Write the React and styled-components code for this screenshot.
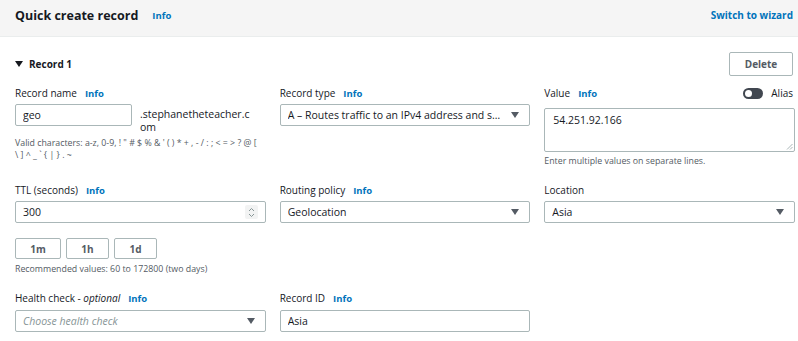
import React from "react";
import styled, { createGlobalStyle } from "styled-components";

const GlobalStyle = createGlobalStyle`
  html, body {
    margin: 0;
    padding: 0;
    background: #ffffff;
    font-family: "Open Sans", "Noto Sans", Arial, sans-serif;
    color: #16191f;
  }
`;

const Panel = styled.div`
  width: 798px;
  height: 341px;
  overflow: hidden;
  background: #ffffff;
`;

const Header = styled.div`
  height: 37px;
  box-sizing: border-box;
  background: #f5f5f5;
  border-bottom: 1px solid #eaeded;
  display: flex;
  align-items: center;
  padding: 0 5px 6px 15px;
`;

const Title = styled.h2`
  margin: 0;
  font-size: 12.5px;
  font-weight: 700;
  color: #16191f;
`;

const InfoLink = styled.a`
  color: #0073bb;
  font-size: ${(p) => p.size || 9.5}px;
  font-weight: 700;
  margin-left: ${(p) => p.gap || 8}px;
  text-decoration: none;
`;

const HeaderLink = styled.a`
  margin-left: auto;
  color: #0073bb;
  font-size: 10px;
  font-weight: 700;
  text-decoration: none;
`;

const Body = styled.div`
  padding: 15px 3px 0 15px;
`;

const SectionRow = styled.div`
  display: flex;
  align-items: center;
  height: 24px;
  margin-right: 2px;
`;

const Caret = styled.span`
  width: 0;
  height: 0;
  border-left: 4px solid transparent;
  border-right: 4px solid transparent;
  border-top: 6px solid #16191f;
  margin-right: 6px;
`;

const SectionTitle = styled.span`
  font-size: 10px;
  font-weight: 700;
`;

const Button = styled.button`
  font-family: inherit;
  background: #ffffff;
  border: 1px solid #aab7b8;
  border-radius: 2px;
  color: #545b64;
  font-weight: 700;
  font-size: ${(p) => p.size || 10}px;
  height: ${(p) => p.h || 24}px;
  width: ${(p) => p.w}px;
  padding: 0;
  cursor: pointer;
`;

const DeleteButton = styled(Button)`
  margin-left: auto;
`;

const Grid = styled.div`
  display: grid;
  grid-template-columns: repeat(3, minmax(0, 1fr));
  column-gap: 14px;
  row-gap: ${(p) => p.rowGap}px;
  margin-top: ${(p) => p.top}px;
`;

const Field = styled.div`
  display: flex;
  flex-direction: column;
  min-width: 0;
`;

const LabelRow = styled.div`
  display: flex;
  align-items: center;
  height: 16px;
  margin-bottom: ${(p) => p.mb || 3}px;
`;

const Label = styled.label`
  font-size: 10px;
  color: #16191f;
`;

const Optional = styled.i`
  font-style: italic;
`;

const Control = styled.div`
  box-sizing: border-box;
  height: 22px;
  width: ${(p) => (p.w ? `${p.w}px` : "100%")};
  border: 1px solid #aab7b8;
  border-radius: 2px;
  background: #ffffff;
  display: flex;
  align-items: center;
  padding: 0 10px 0 7px;
  font-size: 10.5px;
  color: ${(p) => (p.placeholder ? "#879596" : "#16191f")};
  font-style: ${(p) => (p.placeholder ? "italic" : "normal")};
  flex-shrink: 0;
`;

const ControlText = styled.span`
  flex: 1;
  min-width: 0;
  white-space: nowrap;
  overflow: hidden;
  text-overflow: ellipsis;
`;

const SelectCaret = styled.span`
  width: 0;
  height: 0;
  flex-shrink: 0;
  border-left: 4.5px solid transparent;
  border-right: 4.5px solid transparent;
  border-top: 6px solid #545b64;
  margin-left: 10px;
`;

const Spinner = styled.span`
  width: 13px;
  height: 14px;
  background: #f2f3f3;
  border-radius: 2px;
  display: flex;
  align-items: center;
  justify-content: center;
  margin-right: -3px;
`;

const NameRow = styled.div`
  display: flex;
  align-items: flex-start;
`;

const Domain = styled.span`
  font-size: 10.5px;
  line-height: 13px;
  margin: 4px 0 0 8px;
  width: 114px;
  word-break: break-all;
`;

const Help = styled.div`
  font-size: 8.8px;
  line-height: 12px;
  color: #545b64;
  margin-top: ${(p) => p.mt || 0}px;
`;

const Alias = styled.div`
  margin-left: auto;
  display: flex;
  align-items: center;
  font-size: 10px;
  margin-right: 2px;
`;

const Toggle = styled.span`
  position: relative;
  width: 20px;
  height: 11px;
  border-radius: 6px;
  background: #414750;
  margin-right: 8px;
  &::after {
    content: "";
    position: absolute;
    left: 2px;
    top: 2px;
    width: 7px;
    height: 7px;
    border-radius: 50%;
    background: #ffffff;
  }
`;

const TextArea = styled.div`
  box-sizing: border-box;
  position: relative;
  height: 44px;
  margin-top: 4px;
  border: 1px solid #aab7b8;
  border-radius: 2px;
  padding: 4px 8px;
  font-size: 10.5px;
  line-height: 14px;
`;

const Resize = styled.svg`
  position: absolute;
  right: 1px;
  bottom: 1px;
`;

const Presets = styled.div`
  display: flex;
  gap: 5px;
  margin-top: 15px;
`;

const ChevronSpinner = () => (
  <Spinner>
    <svg width="7" height="11" viewBox="0 0 7 11" fill="none" stroke="#879596" strokeWidth="1">
      <path d="M1 4 L3.5 1.5 L6 4" />
      <path d="M1 7 L3.5 9.5 L6 7" />
    </svg>
  </Spinner>
);

const Select = ({ value, placeholder }) => (
  <Control placeholder={placeholder ? 1 : undefined}>
    <ControlText>{value || placeholder}</ControlText>
    <SelectCaret />
  </Control>
);

const FieldLabel = ({ children, info = true, mb }) => (
  <LabelRow mb={mb}>
    <Label>{children}</Label>
    {info && <InfoLink>Info</InfoLink>}
  </LabelRow>
);

const App = () => {
  return (
    <>
      <GlobalStyle />
      <Panel>
        <Header>
          <Title>Quick create record</Title>
          <InfoLink gap={14}>Info</InfoLink>
          <HeaderLink>Switch to wizard</HeaderLink>
        </Header>
        <Body>
          <SectionRow>
            <Caret />
            <SectionTitle>Record 1</SectionTitle>
            <DeleteButton w={64}>Delete</DeleteButton>
          </SectionRow>

          <Grid top={9} rowGap={15}>
            <Field>
              <FieldLabel>Record name</FieldLabel>
              <NameRow>
                <Control w={117}>
                  <ControlText>geo</ControlText>
                </Control>
                <Domain>.stephanetheteacher.com</Domain>
              </NameRow>
              <Help mt={3}>
                {'Valid characters: a-z, 0-9, ! " # $ % & \' ( ) * + , - / : ; < = > ? @ ['}
                <br />
                {"\\ ] ^ _ ` { | } . ~"}
              </Help>
            </Field>
            <Field>
              <FieldLabel>Record type</FieldLabel>
              <Select value="A – Routes traffic to an IPv4 address and some AWS resources" />
            </Field>
            <Field>
              <LabelRow>
                <Label>Value</Label>
                <InfoLink>Info</InfoLink>
                <Alias>
                  <Toggle />
                  Alias
                </Alias>
              </LabelRow>
              <TextArea>
                54.251.92.166
                <Resize width="7" height="7" viewBox="0 0 7 7" stroke="#aab7b8" strokeWidth="1">
                  <path d="M6.5 1 L1 6.5 M6.5 4 L4 6.5" />
                </Resize>
              </TextArea>
              <Help mt={3}>Enter multiple values on separate lines.</Help>
            </Field>

            <Field>
              <FieldLabel>TTL (seconds)</FieldLabel>
              <Control>
                <ControlText>300</ControlText>
                <ChevronSpinner />
              </Control>
              <Presets>
                <Button w={46} h={21} size={10}>1m</Button>
                <Button w={43} h={21} size={10}>1h</Button>
                <Button w={43} h={21} size={10}>1d</Button>
              </Presets>
              <Help mt={4}>Recommended values: 60 to 172800 (two days)</Help>
            </Field>
            <Field>
              <FieldLabel>Routing policy</FieldLabel>
              <Select value="Geolocation" />
            </Field>
            <Field>
              <FieldLabel info={false}>Location</FieldLabel>
              <Select value="Asia" />
            </Field>

            <Field>
              <FieldLabel mb={4}>
                Health check - <Optional>optional</Optional>
              </FieldLabel>
              <Select placeholder="Choose health check" />
            </Field>
            <Field>
              <FieldLabel mb={4}>Record ID</FieldLabel>
              <Control>
                <ControlText>Asia</ControlText>
              </Control>
            </Field>
          </Grid>
        </Body>
      </Panel>
    </>
  );
};

export default App;
